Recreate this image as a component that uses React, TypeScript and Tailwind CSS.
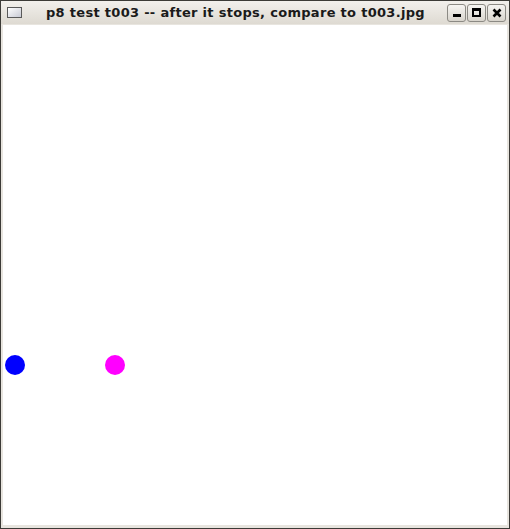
export default function App() {
  return (
    <div className="w-[510px] h-[529px] bg-[#3c3b37] p-px" style={{ fontFamily: '"DejaVu Sans", sans-serif' }}>
      <div className="w-full h-full flex flex-col bg-[#e8e5df]">
        {/* title bar */}
        <div className="h-[23px] flex items-center pl-[6px] pr-[3px] bg-gradient-to-b from-[#f2f0ec] to-[#dedad2]">
          <div className="w-[15px] h-[11px] border border-[#5a5a5a] bg-gradient-to-br from-[#ffffff] to-[#c8cad4]" />
          <div className="flex-1 pl-[24px] text-[13px] font-bold tracking-[0.3px] text-[#1a1a1a] leading-none whitespace-nowrap">
            p8 test t003 -- after it stops, compare to t003.jpg
          </div>
          <div className="flex gap-px">
            <div className="w-[19px] h-[18px] rounded-[3px] border border-[#8c8a84] bg-gradient-to-b from-[#f6f5f2] to-[#d8d4cc] flex items-end justify-center pb-[4px]">
              <div className="w-[8px] h-[3px] bg-black" />
            </div>
            <div className="w-[19px] h-[18px] rounded-[3px] border border-[#8c8a84] bg-gradient-to-b from-[#f6f5f2] to-[#d8d4cc] flex items-center justify-center">
              <div className="w-[9px] h-[9px] border-2 border-black border-t-[3px]" />
            </div>
            <div className="w-[19px] h-[18px] rounded-[3px] border border-[#8c8a84] bg-gradient-to-b from-[#f6f5f2] to-[#d8d4cc] flex items-center justify-center">
              <svg width="10" height="10" viewBox="0 0 10 10">
                <path d="M1.5 1.5 L8.5 8.5 M8.5 1.5 L1.5 8.5" stroke="black" strokeWidth="2.6" />
              </svg>
            </div>
          </div>
        </div>
        {/* client area */}
        <div className="flex-1 mx-[2px] mt-[1px] mb-[3px] bg-white relative">
          <div className="absolute left-[2px] top-[330px] w-[20px] h-[20px] rounded-full bg-[#0000ff]" />
          <div className="absolute left-[102px] top-[330px] w-[20px] h-[20px] rounded-full bg-[#ff00ff]" />
        </div>
      </div>
    </div>
  );
}
